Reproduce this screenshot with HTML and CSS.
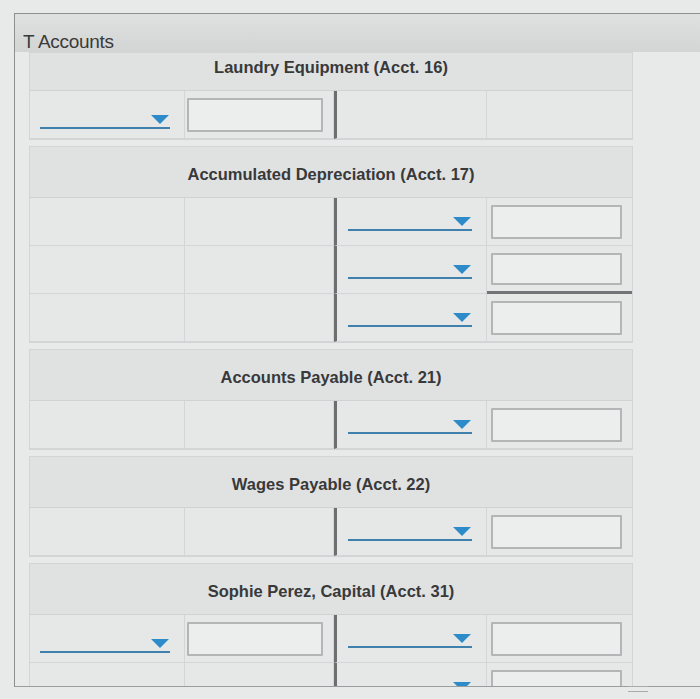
FILE: index.html
```html
<!DOCTYPE html>
<html lang="en">
<head>
<meta charset="utf-8">
<title>T Accounts</title>
<link rel="stylesheet" href="styles.css">
</head>
<body>
<div class="frame">
  <div class="band">T Accounts</div>

  <section class="acct acct-first">
    <div class="acct-title">Laundry Equipment (Acct. 16)</div>
    <div class="acct-grid">
      <div class="cell"><span class="select"><span class="caret"></span></span></div>
      <div class="cell"><span class="amount"></span></div>
      <div class="cell cr"></div>
      <div class="cell"></div>
    </div>
  </section>

  <section class="acct">
    <div class="acct-title">Accumulated Depreciation (Acct. 17)</div>
    <div class="acct-grid">
      <div class="cell"></div>
      <div class="cell"></div>
      <div class="cell cr"><span class="select"><span class="caret"></span></span></div>
      <div class="cell"><span class="amount"></span></div>

      <div class="cell"></div>
      <div class="cell"></div>
      <div class="cell cr"><span class="select"><span class="caret"></span></span></div>
      <div class="cell total"><span class="amount"></span></div>

      <div class="cell"></div>
      <div class="cell"></div>
      <div class="cell cr"><span class="select"><span class="caret"></span></span></div>
      <div class="cell"><span class="amount"></span></div>
    </div>
  </section>

  <section class="acct">
    <div class="acct-title">Accounts Payable (Acct. 21)</div>
    <div class="acct-grid">
      <div class="cell"></div>
      <div class="cell"></div>
      <div class="cell cr"><span class="select"><span class="caret"></span></span></div>
      <div class="cell"><span class="amount"></span></div>
    </div>
  </section>

  <section class="acct">
    <div class="acct-title">Wages Payable (Acct. 22)</div>
    <div class="acct-grid">
      <div class="cell"></div>
      <div class="cell"></div>
      <div class="cell cr"><span class="select"><span class="caret"></span></span></div>
      <div class="cell"><span class="amount"></span></div>
    </div>
  </section>

  <section class="acct">
    <div class="acct-title">Sophie Perez, Capital (Acct. 31)</div>
    <div class="acct-grid">
      <div class="cell"><span class="select"><span class="caret"></span></span></div>
      <div class="cell"><span class="amount"></span></div>
      <div class="cell cr"><span class="select"><span class="caret"></span></span></div>
      <div class="cell"><span class="amount"></span></div>

      <div class="cell"></div>
      <div class="cell"></div>
      <div class="cell cr"><span class="select"><span class="caret"></span></span></div>
      <div class="cell"><span class="amount"></span></div>
    </div>
  </section>
</div>
<div class="footer"><span class="grip"></span></div>
</body>
</html>
```

FILE: styles.css
```css
html, body {
  margin: 0;
  padding: 0;
  background: #e8eaea;
  font-family: "Liberation Sans", Arial, sans-serif;
  color: #333;
}

.frame {
  margin: 13px 0 0 14px;
  height: 672px;
  overflow: hidden;
  border-top: 1px solid #8c8f90;
  border-left: 1px solid #8c8f90;
  border-bottom: 1px solid #9a9d9e;
}

.band {
  height: 38px;
  padding: 17px 0 0 8px;
  box-sizing: border-box;
  background: linear-gradient(#dfe1e1, #d3d5d5);
  font-size: 19px;
  line-height: 22px;
  color: #3a3a3a;
  letter-spacing: -0.3px;
}

.acct {
  width: 604px;
  margin: 0 0 6px 14px;
  border: 1px solid #d2d5d5;
  box-sizing: border-box;
  background: #e6e8e8;
}

.acct-title {
  height: 51px;
  display: flex;
  align-items: center;
  justify-content: center;
  padding-top: 5px;
  box-sizing: border-box;
  background: #e0e2e2;
  border-bottom: 1px solid #d0d3d3;
  font-size: 16.5px;
  font-weight: bold;
  color: #38393a;
}

.acct-first .acct-title {
  height: 38px;
  align-items: flex-start;
  padding-top: 5px;
}

.acct-grid {
  display: grid;
  grid-template-columns: 155px 149px 153px 1fr;
  grid-auto-rows: 48px;
}

.cell {
  position: relative;
  box-sizing: border-box;
  border-right: 1px solid #d3d6d6;
  border-bottom: 1px solid #d3d6d6;
  padding: 7px 10px 6px 2px;
  display: flex;
  align-items: stretch;
}

.cell:nth-child(4n) {
  border-right: 0;
  padding-left: 4px;
}

.cell.cr {
  border-left: 3px solid #6c6f71;
  padding: 0 14px 0 11px;
}

.cell.total {
  border-bottom: 3px solid #727577;
}

/* drop-down: underline with caret at the right end */
.select {
  flex: 1;
  align-self: flex-end;
  position: relative;
  height: 16px;
  margin: 0 4px 3px 8px;
  border-bottom: 2px solid #3f80ad;
}

.cell.cr .select {
  margin: 0 0 14px 0;
}

.caret {
  position: absolute;
  right: 1px;
  bottom: 3px;
  width: 0;
  height: 0;
  border-left: 9px solid transparent;
  border-right: 9px solid transparent;
  border-top: 9px solid #2e8bc9;
}

/* amount entry box */
.amount {
  flex: 1;
  background: #eceeee;
  border: 2px solid #b3b6b7;
  border-radius: 1px;
}

.footer {
  height: 12px;
  display: flex;
  align-items: center;
  padding-left: 628px;
}

.grip {
  width: 20px;
  height: 4px;
  margin-top: -8px;
  border-top: 1px solid #a8abac;
  border-bottom: 1px solid #a8abac;
}
```
